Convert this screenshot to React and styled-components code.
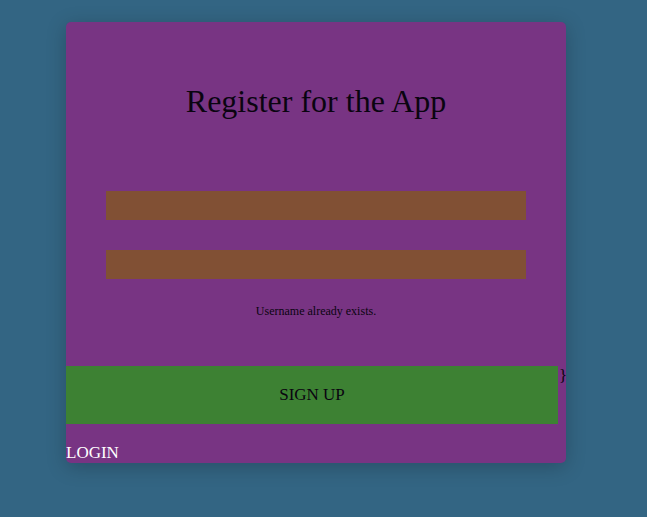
import React from "react";
import styled, { createGlobalStyle } from "styled-components";

const Global = createGlobalStyle`
  html, body {
    margin: 0;
    padding: 0;
    background: #336583;
    font-family: "Liberation Serif", "Times New Roman", serif;
  }
`;

const Page = styled.div`
  width: 632px;
  min-height: 517px;
  display: flex;
  justify-content: center;
  align-items: flex-start;
  padding-top: 22px;
  box-sizing: border-box;
`;

const Card = styled.div`
  width: 500px;
  box-sizing: border-box;
  padding-top: 40px;
  background: #783483;
  border-radius: 5px;
  box-shadow: 0 4px 20px rgba(0, 0, 0, 0.22);
  display: flex;
  flex-direction: column;
`;

const Title = styled.h1`
  margin: 21.44px 0 0;
  font-size: 32px;
  font-weight: normal;
  line-height: normal;
  text-align: center;
  color: #0a0410;
`;

const Form = styled.form`
  display: flex;
  flex-direction: column;
  padding: 0 40px;
  margin-top: 71px;
  gap: 30px;
`;

const Field = styled.input`
  display: block;
  width: 100%;
  height: 29px;
  box-sizing: border-box;
  border: none;
  margin: 0;
  padding: 0 8px;
  background: #815034;
  outline: none;
  font-family: inherit;
`;

const ErrorText = styled.p`
  margin: 25px 0 0;
  font-size: 12px;
  line-height: normal;
  text-align: center;
  color: #0a0410;
`;

const ButtonRow = styled.div`
  display: flex;
  align-items: flex-start;
  margin-top: 47px;
`;

const SignUp = styled.button`
  flex: 0 0 492px;
  width: 492px;
  height: 58px;
  border: none;
  margin: 0;
  padding: 0;
  background: #3d8133;
  color: #0a0410;
  font-family: "Liberation Serif", "Times New Roman", serif;
  font-size: 17px;
  cursor: pointer;
`;

const Brace = styled.span`
  flex: 0 0 auto;
  font-size: 17px;
  line-height: normal;
  margin-left: 1px;
  color: #0a0410;
`;

const LoginLink = styled.a`
  display: block;
  margin-top: 19px;
  font-size: 17px;
  line-height: normal;
  color: #ffffff;
  text-decoration: none;
  cursor: pointer;
`;

export default function App() {
  return (
    <>
      <Global />
      <Page>
        <Card>
          <Title>Register for the App</Title>
          <Form onSubmit={(e) => e.preventDefault()}>
            <Field type="text" aria-label="Username" />
            <Field type="password" aria-label="Password" />
          </Form>
          <ErrorText>Username already exists.</ErrorText>
          <ButtonRow>
            <SignUp type="button">SIGN UP</SignUp>
            <Brace>{"}"}</Brace>
          </ButtonRow>
          <LoginLink>LOGIN</LoginLink>
        </Card>
      </Page>
    </>
  );
}
